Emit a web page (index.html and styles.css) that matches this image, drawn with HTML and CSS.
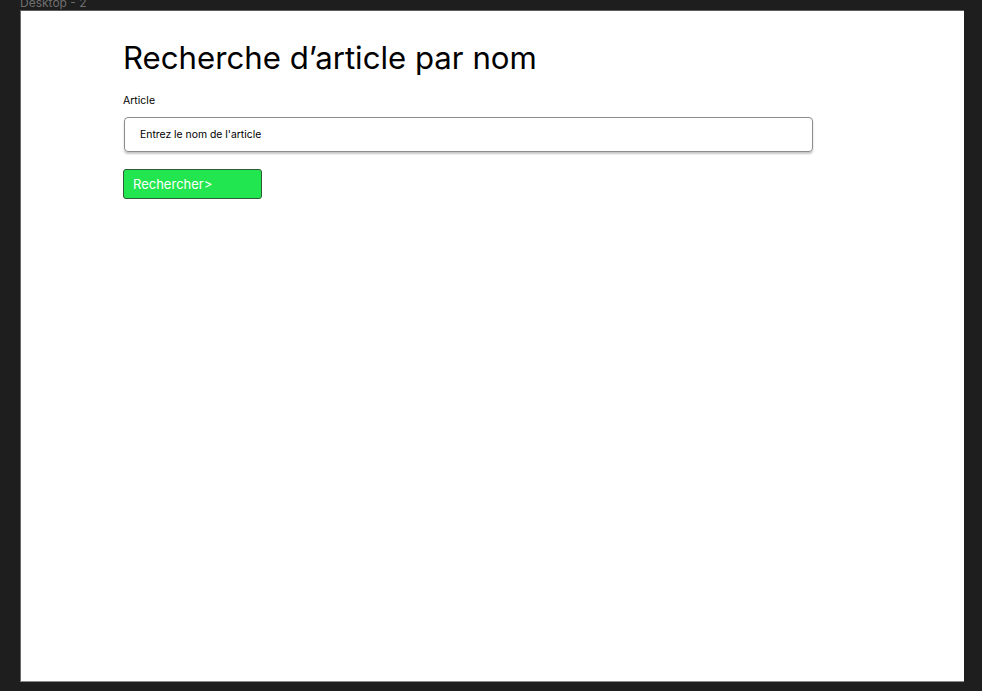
FILE: index.html
```html
<!DOCTYPE html>
<html lang="fr">
<head>
<meta charset="utf-8">
<title>Desktop - 2</title>
<link rel="stylesheet" href="styles.css">
</head>
<body>
  <div class="frame-label">Desktop - 2</div>
  <main class="frame">
    <div class="content">
      <h1 class="title">Recherche d’article par nom</h1>
      <label class="field-label" for="article">Article</label>
      <div class="input-box">
        <input id="article" class="input" type="text" placeholder="Entrez le nom de l'article">
      </div>
      <button class="search-btn" type="button">Rechercher&gt;</button>
    </div>
  </main>
</body>
</html>
```
FILE: styles.css
```css
html, body {
  margin: 0;
  padding: 0;
}
body {
  background: #1e1e1e;
  width: 982px;
  height: 691px;
  overflow: hidden;
  font-family: Inter, "Noto Sans", sans-serif;
}
.frame-label {
  height: 10px;
  line-height: 6px;
  padding-left: 20px;
  font-size: 12px;
  color: #6f6f6f;
  overflow: visible;
}
.frame {
  margin-left: 20px;
  width: 944px;
  height: 672px;
  box-sizing: border-box;
  background: #fff;
  border-top: 1px solid #5b5b5b;
  border-left: 1px solid #6a6a6a;
  border-bottom: 1px solid #8a8a8a;
}
.content {
  padding-left: 102px;
  display: flex;
  flex-direction: column;
  align-items: flex-start;
}
.title {
  margin: 27px 0 0 0;
  font-size: 31.2px;
  font-weight: 400;
  line-height: 40px;
  color: #000;
  letter-spacing: 0;
}
.field-label {
  margin-top: 16px;
  font-size: 10.5px;
  line-height: 14px;
  color: #000;
}
.input-box {
  margin-top: 9px;
  margin-left: 1px;
  width: 689px;
  height: 35px;
  box-sizing: border-box;
  border: 1px solid #8c8c8c;
  border-radius: 4px;
  box-shadow: 0 2px 2px rgba(0,0,0,0.22);
  display: flex;
  align-items: center;
}
.input {
  border: none;
  outline: none;
  background: transparent;
  width: 100%;
  padding: 0 0 0 15px;
  font-family: Inter, "Noto Sans", sans-serif;
  font-size: 10.4px;
  color: #000;
}
.input::placeholder {
  color: #000;
  opacity: 1;
}
.search-btn {
  margin-top: 17px;
  width: 139px;
  height: 30px;
  box-sizing: border-box;
  background: #22e64f;
  border: 1px solid #2f5a37;
  border-radius: 3px;
  color: #fff;
  font-family: Inter, "Noto Sans", sans-serif;
  font-size: 13px;
  text-align: left;
  padding: 0 0 0 9px;
  cursor: pointer;
}
```
